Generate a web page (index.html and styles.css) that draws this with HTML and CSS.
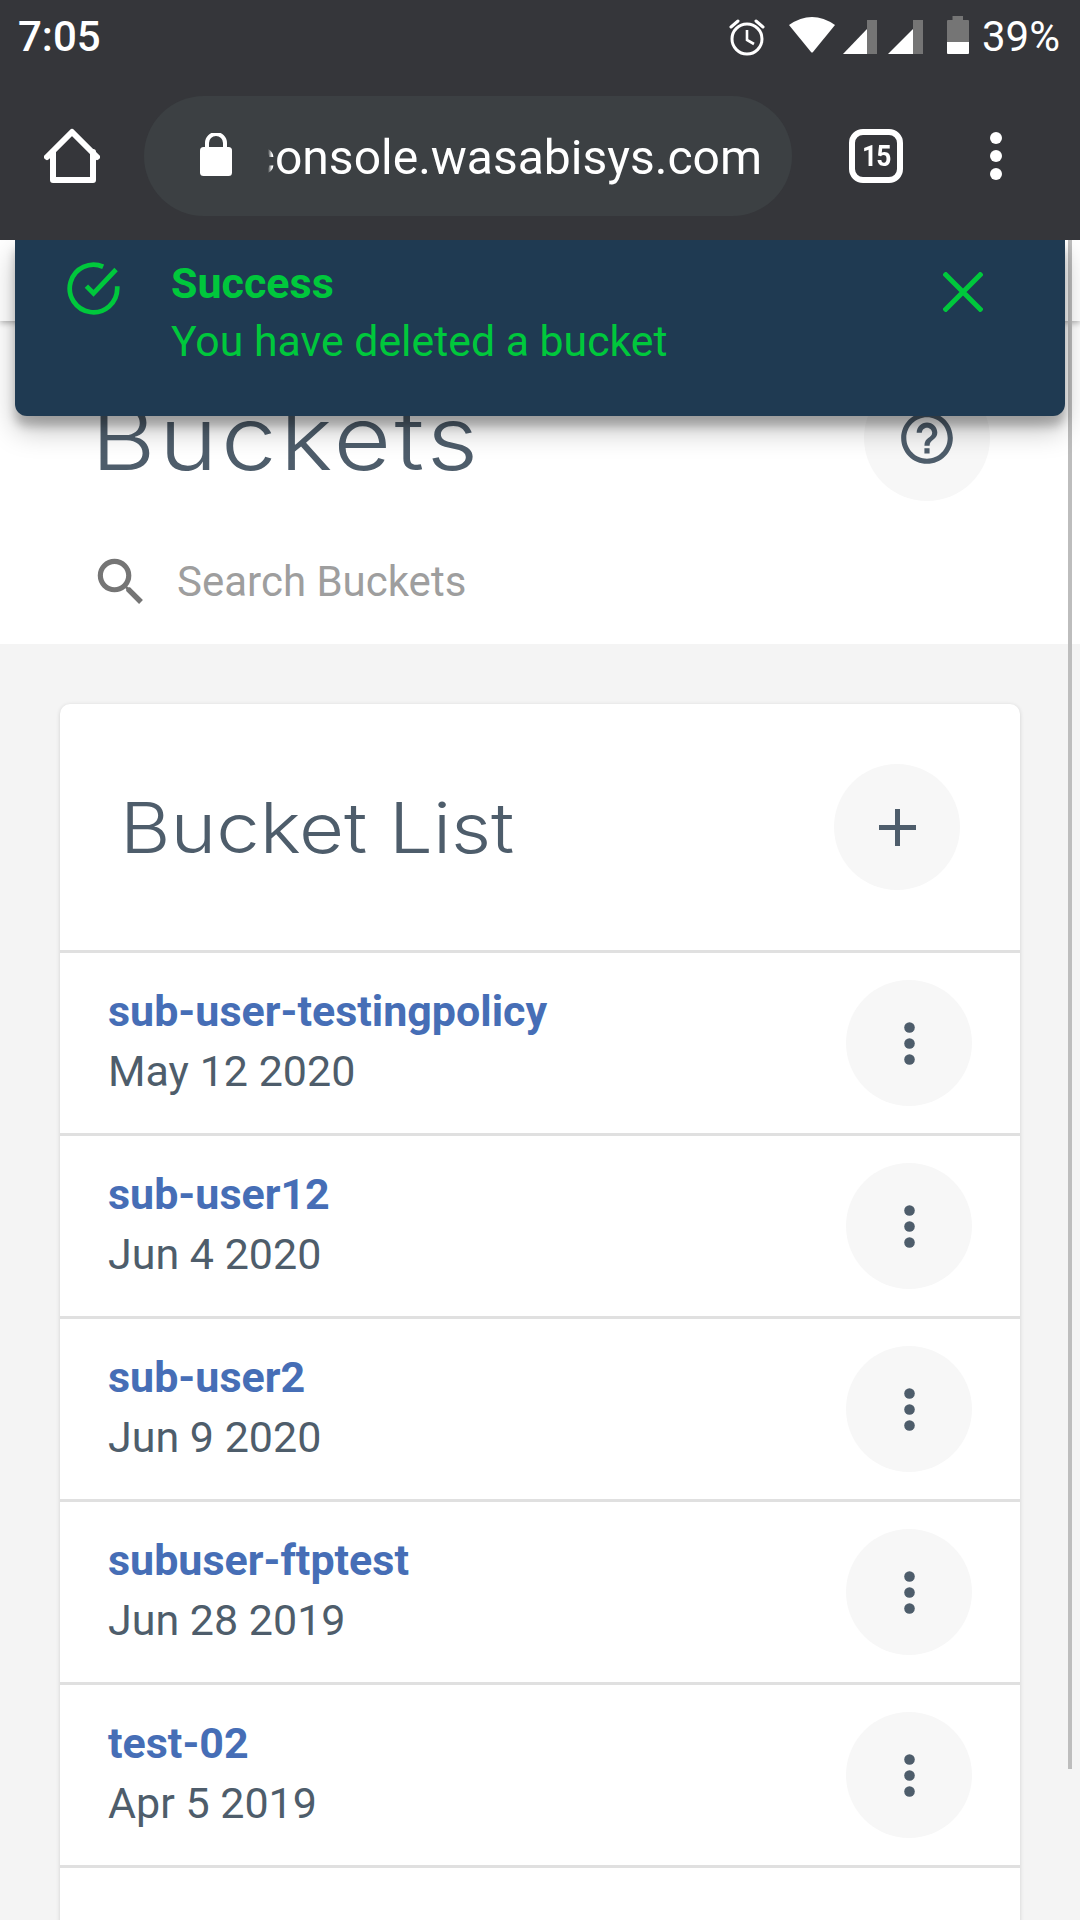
FILE: index.html
```html
<!DOCTYPE html>
<html lang="en">
<head>
<meta charset="utf-8">
<title>Buckets</title>
<link rel="stylesheet" href="styles.css">
</head>
<body>
<header class="chrome">
  <div class="statusbar">
    <span class="clock">7:05</span>
    <div class="status-icons">
      <svg class="ic-alarm" width="38" height="38" viewBox="0 0 38 38" fill="none" stroke="#fff"><circle cx="19" cy="21" r="15" stroke-width="3"/><path d="M19 12v10l7 4" stroke-width="2.6"/><path d="M3 9l7-6M35 9l-7-6" stroke-width="3" stroke-linecap="round"/></svg>
      <svg class="ic-wifi" width="46" height="36" viewBox="0 0 46 36"><path d="M0 8Q23 -8 46 8L24 35Q23 36 22 35Z" fill="#fff"/></svg>
      <svg class="ic-signal" width="34" height="34" viewBox="0 0 34 34"><path d="M24 0L34 0V34H24Z" fill="#757575"/><path d="M24 9V34H0Z" fill="#fff"/></svg>
      <svg class="ic-signal2" width="35" height="34" viewBox="0 0 35 34"><path d="M25 0L35 0V34H25Z" fill="#757575"/><path d="M25 9V34H0Z" fill="#fff"/></svg>
      <svg class="ic-batt" width="22" height="38" viewBox="0 0 22 38"><path d="M5.500 0H16V4H21Q22 4 22 5V26H0V5Q0 4 1 4H5.500Z" fill="#757575"/><path d="M0 26H22V37Q22 38 21 38H1Q0 38 0 37Z" fill="#fff"/></svg>
      <span class="battery-text">39%</span>
    </div>
  </div>
  <div class="toolbar">
    <svg class="ic-home" width="56" height="56" viewBox="0 0 56 56" fill="none" stroke="#fff" stroke-width="6" stroke-linejoin="round" stroke-linecap="round"><path d="M3 29L28 4L53 29"/><path d="M9 24V52H49V24"/></svg>
    <div class="omnibox">
      <svg class="ic-lock" width="32" height="44" viewBox="0 0 32 44"><path d="M7 16V10a9 9 0 0 1 18 0V16" fill="none" stroke="#fff" stroke-width="4"/><rect y="14" width="32" height="29" rx="3.500" fill="#fff"/></svg>
      <div class="url-clip"><span class="url">console.wasabisys.com</span></div>
    </div>
    <div class="tabs"><span class="tabs-count">15</span></div>
    <svg class="ic-more" width="12" height="48" viewBox="0 0 12 48" fill="#fff"><circle cx="6" cy="6" r="6"/><circle cx="6" cy="24" r="6"/><circle cx="6" cy="42" r="6"/></svg>
  </div>
</header>

<main class="page">
  <div class="appbar"></div>
  <section class="intro">
    <div class="title-row">
      <h1 class="page-title">Buckets</h1>
      <div class="circle-btn help-btn">
        <svg width="62" height="62" viewBox="0 0 24 24" fill="#4e5d6b"><path d="M11 18h2v-2h-2v2zm1-16C6.480 2 2 6.480 2 12s4.480 10 10 10 10-4.480 10-10S17.520 2 12 2zm0 18c-4.410 0-8-3.590-8-8s3.590-8 8-8 8 3.590 8 8-3.590 8-8 8zm0-14c-2.210 0-4 1.790-4 4h2c0-1.100.9-2 2-2s2 .9 2 2c0 2-3 1.750-3 5h2c0-2.250 3-2.500 3-5 0-2.210-1.790-4-4-4z"/></svg>
      </div>
    </div>
    <div class="search-row">
      <svg class="ic-search" width="62" height="62" viewBox="0 0 24 24" fill="#757575"><path d="M15.500 14h-.79l-.28-.27A6.470 6.470 0 0 0 16 9.500 6.500 6.500 0 1 0 9.500 16c1.610 0 3.090-.59 4.230-1.570l.27.28v.79l5 4.990L20.490 19l-4.990-5zm-6 0C7.010 14 5 11.990 5 9.500S7.010 5 9.500 5 14 7.010 14 9.500 11.990 14 9.500 14z"/></svg>
      <span class="search-text">Search Buckets</span>
    </div>
  </section>

  <section class="card">
    <div class="card-head">
      <h2 class="card-title">Bucket List</h2>
      <div class="circle-btn">
        <svg width="37" height="37" viewBox="0 0 37 37" fill="#4e5d6b"><rect x="16" width="5" height="37"/><rect y="16" width="37" height="5"/></svg>
      </div>
    </div>
    <div class="row">
      <div class="row-text"><a class="row-name">sub-user-testingpolicy</a><span class="row-date">May 12 2020</span></div>
      <div class="circle-btn"><svg class="dots" width="11" height="43" viewBox="0 0 11 43" fill="#4e5d6b"><circle cx="5.500" cy="5.500" r="5.300"/><circle cx="5.500" cy="21.500" r="5.300"/><circle cx="5.500" cy="37.500" r="5.300"/></svg></div>
    </div>
    <div class="row">
      <div class="row-text"><a class="row-name">sub-user12</a><span class="row-date">Jun 4 2020</span></div>
      <div class="circle-btn"><svg class="dots" width="11" height="43" viewBox="0 0 11 43" fill="#4e5d6b"><circle cx="5.500" cy="5.500" r="5.300"/><circle cx="5.500" cy="21.500" r="5.300"/><circle cx="5.500" cy="37.500" r="5.300"/></svg></div>
    </div>
    <div class="row">
      <div class="row-text"><a class="row-name">sub-user2</a><span class="row-date">Jun 9 2020</span></div>
      <div class="circle-btn"><svg class="dots" width="11" height="43" viewBox="0 0 11 43" fill="#4e5d6b"><circle cx="5.500" cy="5.500" r="5.300"/><circle cx="5.500" cy="21.500" r="5.300"/><circle cx="5.500" cy="37.500" r="5.300"/></svg></div>
    </div>
    <div class="row">
      <div class="row-text"><a class="row-name">subuser-ftptest</a><span class="row-date">Jun 28 2019</span></div>
      <div class="circle-btn"><svg class="dots" width="11" height="43" viewBox="0 0 11 43" fill="#4e5d6b"><circle cx="5.500" cy="5.500" r="5.300"/><circle cx="5.500" cy="21.500" r="5.300"/><circle cx="5.500" cy="37.500" r="5.300"/></svg></div>
    </div>
    <div class="row">
      <div class="row-text"><a class="row-name">test-02</a><span class="row-date">Apr 5 2019</span></div>
      <div class="circle-btn"><svg class="dots" width="11" height="43" viewBox="0 0 11 43" fill="#4e5d6b"><circle cx="5.500" cy="5.500" r="5.300"/><circle cx="5.500" cy="21.500" r="5.300"/><circle cx="5.500" cy="37.500" r="5.300"/></svg></div>
    </div>
  </section>

  <div class="toast">
    <svg class="ic-check" width="57" height="57" viewBox="0 0 24 24" fill="none" stroke="#00c83c" stroke-width="2"><path d="M22 11.080V12a10 10 0 1 1-5.930-9.140"/><path d="M21.500 4L12 14.010l-3-3"/></svg>
    <div class="toast-text">
      <strong class="toast-title">Success</strong>
      <span class="toast-msg">You have deleted a bucket</span>
    </div>
    <svg class="ic-close" width="40" height="40" viewBox="0 0 40 40" stroke="#00c83c" stroke-width="5"><path d="M1 1L39 39M39 1L1 39"/></svg>
  </div>
  <div class="scrollbar"></div>
</main>
</body>
</html>
```

FILE: styles.css
```css
* { box-sizing: border-box; }
html, body { margin: 0; padding: 0; }
body {
  width: 1080px;
  height: 1920px;
  overflow: hidden;
  background: #f4f4f4;
  font-family: Roboto, "Liberation Sans", sans-serif;
}
.chrome {
  height: 240px;
  background: #35363a;
  color: #fff;
  position: relative;
  z-index: 5;
}
.statusbar {
  height: 72px;
  padding: 17px 20px 0 18px;
  display: flex;
  justify-content: space-between;
  align-items: flex-start;
}
.clock { font-size: 42px; line-height: 40px; font-weight: 500; }
.status-icons { display: flex; align-items: flex-start; margin-top: -1px; }
.ic-alarm { margin-top: 2px; margin-right: 23px; margin-left: 0; }
.ic-wifi { margin-top: 1px; margin-right: 8px; }
.ic-signal { margin-top: 4px; margin-right: 11px; }
.ic-signal2 { margin-top: 4px; margin-right: 24px; }
.ic-batt { margin-top: 0; margin-right: 13px; }
.battery-text { font-size: 42px; line-height: 40px; margin-top: 1px; }
.toolbar {
  height: 168px;
  padding: 0 0 0 44px;
  display: flex;
  align-items: center;
}
.ic-home { flex: none; }
.omnibox {
  width: 648px;
  height: 120px;
  margin-left: 44px;
  border-radius: 60px;
  background: #3c4043;
  display: flex;
  align-items: center;
  padding-left: 56px;
}
.ic-lock { margin-top: -2px; flex: none; }
.url-clip {
  width: 494px;
  margin-left: 36px;
  display: flex;
  justify-content: flex-end;
  overflow: hidden;
  -webkit-mask-image: linear-gradient(90deg, transparent 0, #000 4px);
  mask-image: linear-gradient(90deg, transparent 0, #000 4px);
}
.url { font-size: 48px; line-height: 64px; white-space: nowrap; flex: none; margin-top: 3px; }
.tabs {
  width: 54px;
  height: 54px;
  margin-left: 57px;
  border: 6px solid #fff;
  border-radius: 14px;
  display: flex;
  align-items: center;
  justify-content: center;
}
.tabs-count { font-size: 30px; font-weight: 700; letter-spacing: -1px; line-height: 1; transform: scaleX(.88); }
.ic-more { margin-left: 87px; }

.page { position: relative; }
.appbar {
  height: 81px;
  background: #fff;
  box-shadow: 0 2px 6px rgba(0, 0, 0, .3);
  position: relative;
  z-index: 1;
}
.intro { background: #fff; height: 323px; padding: 54px 90px 0 91px; }
.title-row { display: flex; justify-content: space-between; align-items: center; }
.page-title {
  margin: 0;
  font-family: Inter, sans-serif;
  font-weight: 300;
  font-size: 88px;
  line-height: 126px;
  letter-spacing: 3px;
  color: #4e5d6b;
  transform: scaleX(1.13);
  transform-origin: left center;
}
.circle-btn {
  width: 126px;
  height: 126px;
  border-radius: 50%;
  background: #f7f7f7;
  flex: none;
  display: flex;
  align-items: center;
  justify-content: center;
}
.search-row { display: flex; align-items: center; margin-top: 50px; margin-left: -1px; }
.search-text { font-size: 42px; line-height: 60px; color: #9e9e9e; margin-left: 25px; }

.card {
  width: 960px;
  margin: 60px 0 0 60px;
  padding-bottom: 60px;
  background: #fff;
  border-radius: 10px 10px 0 0;
  box-shadow: 0 1px 4px rgba(0, 0, 0, .15);
}
.card-head {
  height: 249px;
  border-bottom: 3px solid #e0e0e0;
  padding: 0 60px 0 60px;
  display: flex;
  align-items: center;
  justify-content: space-between;
}
.card-title {
  margin: 0;
  font-family: Inter, sans-serif;
  font-weight: 300;
  font-size: 70px;
  color: #4e5d6b;
  transform: scaleX(1.11);
  transform-origin: left center;
}
.row {
  height: 183px;
  border-bottom: 3px solid #e0e0e0;
  padding: 0 48px;
  display: flex;
  align-items: center;
  justify-content: space-between;
}
.row-text { display: flex; flex-direction: column; margin-top: -4px; }
.row-name { font-size: 43px; line-height: 60px; font-weight: 700; color: #466eb6; }
.row-date { font-size: 43px; line-height: 60px; color: #4e5d6b; }

.toast {
  position: absolute;
  top: 0;
  left: 15px;
  width: 1050px;
  height: 176px;
  border-radius: 0 0 12px 12px;
  background: #1f3a52;
  box-shadow: 0 14px 28px rgba(0, 0, 0, .25), 0 10px 10px rgba(0, 0, 0, .22);
  display: flex;
  align-items: flex-start;
  padding: 20px 0 0 50px;
  z-index: 4;
}
.ic-check { flex: none; }
.toast-text { display: flex; flex-direction: column; margin-left: 49px; width: 772px; color: #00c83c; }
.toast-title { font-size: 43px; line-height: 58px; font-weight: 700; margin-top: -6px; }
.toast-msg { font-size: 42.800px; line-height: 58px; }
.ic-close { margin-top: 12px; }
.scrollbar {
  position: absolute;
  top: 0;
  right: 8px;
  width: 4px;
  height: 1529px;
  background: #bdbdbd;
  z-index: 3;
}
```
